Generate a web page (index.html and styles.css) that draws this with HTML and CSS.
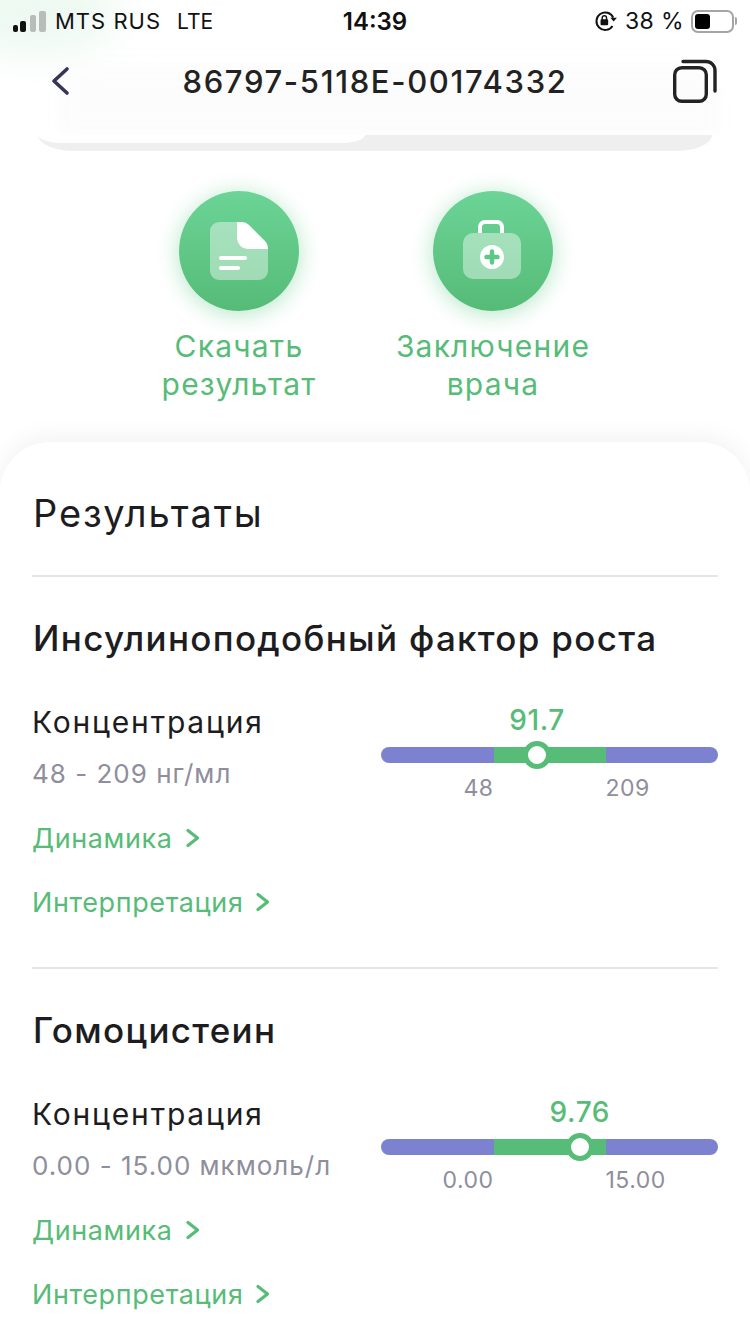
FILE: index.html
```html
<html>
<head>
    <meta charset="utf-8">
    <link rel="stylesheet" href="styles.css">
</head>
<body>
    <div class="screen">
        <div class="glow"></div>
        <div class="nav-shade"></div>
        <div class="statusbar">
            <div class="status-left">
                <svg width="33" height="21" viewBox="0 0 33 21">
                    <rect x="0" y="14" width="5" height="7" rx="2" fill="#111"/>
                    <rect x="7" y="10" width="6" height="11" rx="2" fill="#111"/>
                    <rect x="17" y="4" width="6" height="17" rx="2" fill="#b9bdba"/>
                    <rect x="26" y="0" width="7" height="21" rx="2" fill="#b9bdba"/>
                </svg>
                <span class="carrier">MTS RUS</span>
                <span class="lte">LTE</span>
            </div>
            <div class="status-time">14:39</div>
            <div class="status-right">
                <svg width="24" height="22" viewBox="0 0 22 20">
                    <path d="M17 14.5A8 8 0 1 1 17.6 7" fill="none" stroke="#111" stroke-width="1.8"/>
                    <path d="M15 7h6l-3 3.5z" fill="#111"/>
                    <rect x="6" y="8.500" width="7" height="5.500" rx="1" fill="#111"/>
                    <path d="M7.500 9V7.200a2 2 0 0 1 4 0V9" fill="none" stroke="#111" stroke-width="1.3"/>
                </svg>
                <span class="battery-text">38 %</span>
                <div class="battery"><div class="battery-level"></div></div>
                <div class="battery-cap"></div>
            </div>
        </div>

        <div class="navbar">
            <svg class="nav-back" width="22" height="30" viewBox="0 0 22 30">
                <path d="M18 3L5 15l13 12" fill="none" stroke="#37345a" stroke-width="3.6" stroke-linecap="round" stroke-linejoin="round"/>
            </svg>
            <div class="nav-title">86797-5118E-00174332</div>
            <svg class="nav-copy" width="44" height="44" viewBox="0 0 44 44">
                <rect x="1.700" y="8.700" width="31.600" height="33.600" rx="7" fill="none" stroke="#222" stroke-width="3.4"/>
                <path d="M10 2.500h23a9 9 0 0 1 9 9V32" fill="none" stroke="#222" stroke-width="3.4" stroke-linecap="round"/>
            </svg>
        </div>

        <div class="peek">
            <div class="peek-tab"></div>
        </div>

        <div class="actions">
            <div class="action">
                <div class="action-circle">
                    <svg width="60" height="60" viewBox="0 0 60 60">
                        <path d="M10 1H28V17a11 11 0 0 0 11 11H59V50a9 9 0 0 1-9 9H10a9 9 0 0 1-9-9V10a9 9 0 0 1 9-9z" fill="#fff" fill-opacity=".42"/>
                        <path d="M28 1h5q4 0 7 3L56 20q3 3 3 8H39a11 11 0 0 1-11-11z" fill="#fff"/>
                        <rect x="10" y="35" width="28" height="4" rx="2" fill="#fff"/>
                        <rect x="10" y="45" width="21" height="4" rx="2" fill="#fff"/>
                    </svg>
                </div>
                <div class="action-label">Скачать результат</div>
            </div>
            <div class="action">
                <div class="action-circle">
                    <svg width="60" height="62" viewBox="0 0 60 62">
                        <path d="M17 13V7a5 5 0 0 1 5-5h12a5 5 0 0 1 5 5v6" fill="none" stroke="#fff" stroke-width="4"/>
                        <rect x="0" y="13" width="58" height="46" rx="10" fill="#fff" fill-opacity=".42"/>
                        <circle cx="29" cy="37" r="12" fill="#fff"/>
                        <path d="M29 31.500v11M23.500 37h11" stroke="#5fc788" stroke-width="4.500" stroke-linecap="round"/>
                    </svg>
                </div>
                <div class="action-label">Заключение врача</div>
            </div>
        </div>

        <div class="card">
            <h2 class="card-title">Результаты</h2>

            <div class="item">
                <h3 class="item-title">Инсулиноподобный фактор роста</h3>
                <div class="item-row">
                    <div class="item-info">
                        <div class="item-name">Концентрация</div>
                        <div class="item-range">48 - 209 нг/мл</div>
                    </div>
                    <div class="scale">
                        <div class="scale-value"><span style="left: 46.3%">91.7</span></div>
                        <div class="scale-track">
                            <div class="scale-norm"></div>
                            <div class="scale-thumb" style="left: 46.3%"></div>
                        </div>
                        <div class="scale-labels">
                            <span class="scale-min">48</span>
                            <span class="scale-max">209</span>
                        </div>
                    </div>
                </div>
                <a class="item-link">Динамика <svg width="14" height="20" viewBox="0 0 14 20"><path d="M2 2.500L11.500 10 2 17.500" fill="none" stroke="#57bc77" stroke-width="3.2" stroke-linecap="round" stroke-linejoin="round"/></svg></a>
                <a class="item-link">Интерпретация <svg width="14" height="20" viewBox="0 0 14 20"><path d="M2 2.500L11.500 10 2 17.500" fill="none" stroke="#57bc77" stroke-width="3.2" stroke-linecap="round" stroke-linejoin="round"/></svg></a>
            </div>

            <div class="item">
                <h3 class="item-title">Гомоцистеин</h3>
                <div class="item-row">
                    <div class="item-info">
                        <div class="item-name">Концентрация</div>
                        <div class="item-range">0.00 - 15.00 мкмоль/л</div>
                    </div>
                    <div class="scale">
                        <div class="scale-value"><span style="left: 59%">9.76</span></div>
                        <div class="scale-track">
                            <div class="scale-norm"></div>
                            <div class="scale-thumb" style="left: 59%"></div>
                        </div>
                        <div class="scale-labels">
                            <span class="scale-min">0.00</span>
                            <span class="scale-max">15.00</span>
                        </div>
                    </div>
                </div>
                <a class="item-link">Динамика <svg width="14" height="20" viewBox="0 0 14 20"><path d="M2 2.500L11.500 10 2 17.500" fill="none" stroke="#57bc77" stroke-width="3.2" stroke-linecap="round" stroke-linejoin="round"/></svg></a>
                <a class="item-link">Интерпретация <svg width="14" height="20" viewBox="0 0 14 20"><path d="M2 2.500L11.500 10 2 17.500" fill="none" stroke="#57bc77" stroke-width="3.2" stroke-linecap="round" stroke-linejoin="round"/></svg></a>
            </div>
        </div>
    </div>
</body>
</html>
```

FILE: styles.css
```css
html, body {
    margin: 0;
    padding: 0;
}

body {
    font-family: Inter, "Noto Sans", sans-serif;
    background-color: #fff;
    color: #1d1d1f;
}

.screen {
    position: relative;
    width: 750px;
    height: 1334px;
    overflow: hidden;
    background-color: #fff;
}

.glow {
    position: absolute;
    left: -50px;
    top: -30px;
    width: 170px;
    height: 85px;
    border-radius: 50%;
    background-color: #edf9f1;
    filter: blur(22px);
}

.nav-shade {
    position: absolute;
    left: 60px;
    right: 30px;
    top: 66px;
    height: 69px;
    border-radius: 30px 30px 0 0;
    background-color: #fcfcfc;
    filter: blur(8px);
}

.statusbar {
    position: relative;
    display: flex;
    align-items: center;
    justify-content: space-between;
    height: 42px;
    font-size: 22px;
    color: #111;
}

.status-left {
    display: flex;
    align-items: center;
    gap: 9px;
    width: 300px;
    padding-left: 13px;
}

.carrier {
    letter-spacing: 1px;
}

.lte {
    margin-left: 7px;
    font-size: 21px;
}

.status-time {
    font-weight: 600;
    font-size: 24px;
}

.status-right {
    display: flex;
    align-items: center;
    justify-content: flex-end;
    gap: 7px;
    width: 300px;
    padding-right: 13px;
}

.battery-text {
    font-size: 23px;
    letter-spacing: .4px;
}

.battery {
    width: 43px;
    height: 23px;
    padding: 2px;
    box-sizing: border-box;
    border: 2px solid #a5a5a5;
    border-radius: 7px;
}

.battery-level {
    width: 15px;
    height: 100%;
    border-radius: 3px;
    background-color: #000;
}

.battery-cap {
    width: 2px;
    height: 8px;
    margin-left: -6px;
    border-radius: 0 2px 2px 0;
    background-color: #a5a5a5;
}

.navbar {
    position: relative;
    display: grid;
    grid-template-columns: 1fr auto 1fr;
    align-items: center;
    height: 78px;
    padding: 0 33px 15px;
}

.nav-back {
    margin-left: 16px;
}

.nav-copy {
    justify-self: end;
}

.nav-title {
    font-size: 31px;
    font-weight: 500;
    letter-spacing: 1.650px;
    color: #222;
}

.peek {
    position: relative;
    height: 16px;
    margin: 0 38px;
    background-color: #efefef;
    border-radius: 0 0 36px 36px / 0 0 16px 16px;
}

.peek-tab {
    width: 327px;
    height: 8px;
    background-color: #fff;
    border-radius: 0 0 26px 26px / 0 0 8px 8px;
}

.actions {
    display: flex;
    gap: 60px;
    justify-content: center;
    margin-top: 40px;
    padding-right: 18px;
}

.action {
    display: flex;
    flex-direction: column;
    align-items: center;
    width: 194px;
}

.action-circle {
    display: flex;
    align-items: center;
    justify-content: center;
    width: 120px;
    height: 120px;
    border-radius: 50%;
    background: linear-gradient(#6bd496, #56bb77);
    box-shadow: 0 3px 22px rgba(87, 200, 130, .45);
}

.action-label {
    margin-top: 16px;
    font-size: 30px;
    line-height: 38px;
    letter-spacing: 1.200px;
    text-align: center;
    color: #57bc77;
}

.card {
    position: absolute;
    left: 0;
    right: 0;
    top: 442px;
    bottom: 0;
    padding: 0 32px;
    background-color: #fff;
    border-radius: 50px 50px 0 0;
    box-shadow: 0 -6px 24px rgba(0, 0, 0, .05);
}

.card-title {
    margin: 0;
    padding: 47px 1px 0;
    height: 86px;
    font-size: 38px;
    font-weight: 400;
    line-height: 48px;
    letter-spacing: 1.900px;
}

.item {
    height: 392px;
    border-top: 2px solid #e6e6e6;
    box-sizing: border-box;
}

.item-title {
    margin: 0;
    padding: 39px 1px 0;
    font-size: 35px;
    font-weight: 500;
    line-height: 44px;
    letter-spacing: 1.300px;
}

.item-row {
    display: flex;
    justify-content: space-between;
    margin-top: 43px;
    height: 103px;
}

.item-name {
    font-size: 30px;
    line-height: 38px;
    letter-spacing: 1.800px;
}

.item-range {
    margin-top: 15px;
    font-size: 26px;
    line-height: 36px;
    letter-spacing: 1px;
    color: #8e8e9c;
}

.item-link {
    display: flex;
    align-items: center;
    gap: 13px;
    height: 64px;
    font-size: 27px;
    letter-spacing: .600px;
    color: #57bc77;
}

.scale {
    width: 337px;
    margin-top: -1px;
}

.scale-value {
    position: relative;
    height: 36px;
    margin-bottom: 9px;
}

.scale-value span {
    position: absolute;
    top: 0;
    transform: translateX(-50%);
    font-size: 28px;
    font-weight: 500;
    line-height: 36px;
    letter-spacing: .600px;
    color: #57bc77;
}

.scale-track {
    position: relative;
    display: flex;
    justify-content: center;
    height: 16px;
    border-radius: 8px;
    background-color: #7c82d0;
}

.scale-norm {
    width: 112px;
    background-color: #57bc77;
}

.scale-thumb {
    position: absolute;
    top: -6px;
    width: 28px;
    height: 28px;
    margin-left: -14px;
    box-sizing: border-box;
    border: 5px solid #57bc77;
    border-radius: 50%;
    background-color: #fff;
}

.scale-labels {
    display: grid;
    grid-template-columns: 1fr 112px 1fr;
    margin-top: 10px;
    font-size: 23px;
    line-height: 30px;
    letter-spacing: .500px;
    color: #8e8e9c;
}

.scale-min {
    text-align: right;
}

.scale-max {
    grid-column: 3;
}
```
